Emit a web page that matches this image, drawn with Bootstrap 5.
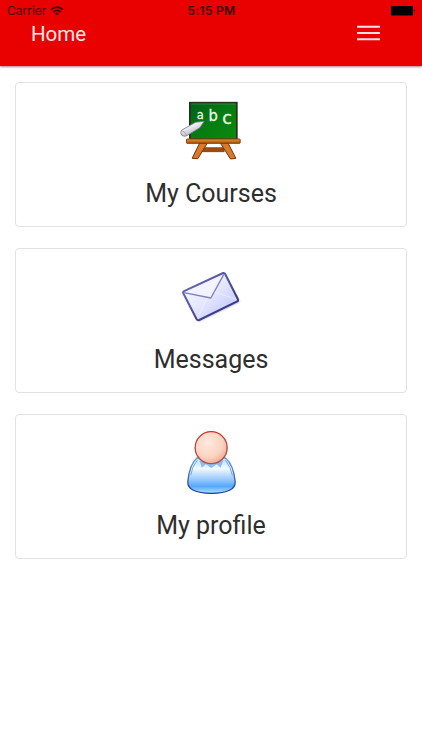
<!DOCTYPE html>
<html lang="en">
<head>
<meta charset="utf-8">
<meta name="viewport" content="width=device-width, initial-scale=1">
<title>Home</title>
<link href="https://cdn.jsdelivr.net/npm/bootstrap@5.3.0/dist/css/bootstrap.min.css" rel="stylesheet">
<style>
body{font-family:Roboto,"Liberation Sans",sans-serif;background:#fff;color:#2e2e2e}
.app-header{height:65.5px;background:#e90000;box-shadow:0 1px 2px rgba(90,0,0,.5)}
.status-bar{height:22px;font:12px/22px Inter,"Liberation Sans",sans-serif;color:#4a0000;padding:0 6px 0 7px;display:grid!important;grid-template-columns:1fr auto 1fr}
.status-time{font-weight:600;color:#3c0000;letter-spacing:.3px;padding-right:0}
.title-bar{height:24px;padding:0 42px 0 31px}
.page-title{font-size:20.5px;line-height:24px;color:#ffe9e9}
.menu-btn{line-height:0;padding-bottom:2px}
.menu-stack{padding:16px 15px 0;gap:20.5px}
.menu-card{height:145.5px;border:1.5px solid #e2e2e2;border-radius:4px;padding-top:7px}
.menu-card svg{width:75px;height:80px}
.menu-label{font-size:25px;line-height:32px;margin-top:8px;color:#2e2e2e}
</style>
</head>
<body>
<header class="app-header">
  <div class="status-bar d-grid">
    <span class="d-flex align-items-center"><span>Carrier</span>
      <svg class="ms-1" width="14" height="10" viewBox="0 0 14 10" fill="none" stroke="#300000" stroke-width="1.7"><path d="M1.2 3.6Q7-1.2 12.8 3.6M3.2 6Q7 2.8 10.8 6"/><path d="M7 9.4 4.9 7.3Q7 5.8 9.1 7.3Z" fill="#300000" stroke="none"/></svg>
    </span>
    <span class="status-time">5:15 PM</span>
    <span class="d-flex align-items-center justify-content-end">
      <svg width="25" height="10" viewBox="0 0 25 10"><rect width="22" height="9.5" rx="1"/><path d="M23 3.2q1.7 1.5 0 3z"/></svg>
    </span>
  </div>
  <nav class="title-bar d-flex justify-content-between align-items-center">
    <span class="page-title">Home</span>
    <a href="#" class="menu-btn" aria-label="Menu"><svg width="23" height="16" viewBox="0 0 23 16" stroke="#ffe1e1" stroke-width="2"><path d="M0 1.7h23M0 8h23M0 14.2h23"/></svg></a>
  </nav>
</header>
<main class="menu-stack d-flex flex-column">
  <a href="#" class="menu-card card align-items-center text-decoration-none">
    <svg viewBox="-1.5 0 225 240">
      <defs>
        <linearGradient id="board" x1="0" y1="0" x2="1" y2="1"><stop stop-color="#006018"/><stop offset=".5" stop-color="#067c12"/><stop offset="1" stop-color="#0c8b08"/></linearGradient>
        <linearGradient id="wood" x1="0" y1="0" x2="0" y2="1"><stop stop-color="#ed9640"/><stop offset="1" stop-color="#a84b08"/></linearGradient>
        <linearGradient id="chalk" x1="0" y1="0" x2=".6" y2="1"><stop offset=".3" stop-color="#fff"/><stop offset="1" stop-color="#a9a9bd"/></linearGradient>
      </defs>
      <path d="M89 173h60v12H83z" fill="#a24b0e" stroke="#69300b" stroke-width="2"/>
      <path d="M75 160h23l-28 46-17-1zM138 160h23l23 45-16 2z" fill="#d97929" stroke="#74330a" stroke-width="3"/>
      <rect x="46" y="38" width="141" height="110" fill="url(#board)" stroke="#24301c" stroke-width="5"/>
      <path d="M50 42h133" stroke="#73916b" stroke-width="1.5"/>
      <rect x="36" y="147" width="161" height="13" rx="2" fill="url(#wood)" stroke="#87400c" stroke-width="3"/>
      <g fill="#e9ffe6" stroke="#e9ffe6" stroke-width=".8" font-family="DejaVu Sans,sans-serif"><text x="67" y="87" font-size="35" textLength="21" lengthAdjust="spacingAndGlyphs">a</text><text x="102" y="94" font-size="45" textLength="28" lengthAdjust="spacingAndGlyphs">b</text><text x="143" y="103" font-size="54" textLength="29" lengthAdjust="spacingAndGlyphs">c</text></g>
      <path d="M89 94 63 97 22 120Q15 128 22 136q7 5 15 1l39-24z" fill="url(#chalk)" stroke="#777b8d" stroke-width="2.5" stroke-linejoin="round"/>
      <path d="M22 122q11 2 14 14" fill="none" stroke="#9696a5" stroke-width="2"/>
    </svg>
    <div class="menu-label">My Courses</div>
  </a>
  <a href="#" class="menu-card card align-items-center text-decoration-none">
    <svg viewBox="-1.5 -12 225 240">
      <defs>
        <linearGradient id="paper" x1="0" y1="0" x2="1" y2="1"><stop stop-color="#fff"/><stop offset=".5" stop-color="#e4e6ff"/><stop offset=".75" stop-color="#cdd2ff"/><stop offset="1" stop-color="#f8f8ff"/></linearGradient>
        <linearGradient id="edge" x1="0" y1="0" x2="1" y2="1"><stop stop-color="#7272bd"/><stop offset="1" stop-color="#29297f"/></linearGradient>
        <filter id="soft" x="-20%" y="-20%" width="140%" height="140%"><feGaussianBlur stdDeviation="2.5"/></filter>
      </defs>
      <path d="M29 98 148 43 195 125 73 184Z" fill="#777" opacity=".7" filter="url(#soft)"/>
      <path d="M27 94 146 39q4-1 6 3l38 75q2 5-2 7L74 180q-5 2-8-3L26 99q-1-3 1-5Z" fill="url(#paper)" stroke="url(#edge)" stroke-width="6" stroke-linejoin="round"/>
      <path d="M29 98 109 114 148 43" fill="#f2f3ff" stroke="#8080bb" stroke-width="4" stroke-linejoin="round"/>
      <path d="M70 172 97 116M185 118l-65-22" fill="none" stroke="#fff" stroke-width="2" opacity=".65"/>
    </svg>
    <div class="menu-label">Messages</div>
  </a>
  <a href="#" class="menu-card card align-items-center text-decoration-none">
    <svg viewBox="-1.5 0 225 240">
      <defs>
        <radialGradient id="face" cx=".4" cy=".35" r=".7"><stop stop-color="#ffeade"/><stop offset=".65" stop-color="#fbd2c1"/><stop offset="1" stop-color="#f0a892"/></radialGradient>
        <linearGradient id="ring" x1="0" y1="0" x2="0" y2="1"><stop stop-color="#d22b22"/><stop offset="1" stop-color="#9c5c50"/></linearGradient>
        <linearGradient id="shirt" x1="0" y1="0" x2="0" y2="1"><stop stop-color="#bddcff"/><stop offset=".3" stop-color="#f1f9ff"/><stop offset=".62" stop-color="#94c7ff"/><stop offset=".8" stop-color="#58a7ff"/><stop offset="1" stop-color="#a8e5ff"/></linearGradient>
        <linearGradient id="shirtEdge" x1="0" y1="0" x2="0" y2="1"><stop stop-color="#6d9cdc"/><stop offset="1" stop-color="#183c96"/></linearGradient>
      </defs>
      <path d="M67 108Q45 127 40 179q-2 34 71 35 73-1 71-35-5-51-29-71Z" fill="url(#shirt)" stroke="url(#shirtEdge)" stroke-width="4"/>
      <path d="M68 115Q52 135 49 159M153 115q16 20 21 46" fill="none" stroke="#78a8e6" stroke-width="3"/>
      <path d="M75 116l7 21 12-10 16 11 17-11 11 10 9-22Z" fill="#8dbcf2"/>
      <circle cx="110" cy="77" r="48" fill="url(#face)" stroke="url(#ring)" stroke-width="4"/>
    </svg>
    <div class="menu-label">My profile</div>
  </a>
</main>
<script src="https://cdn.jsdelivr.net/npm/bootstrap@5.3.0/dist/js/bootstrap.bundle.min.js"></script>
</body>
</html>
